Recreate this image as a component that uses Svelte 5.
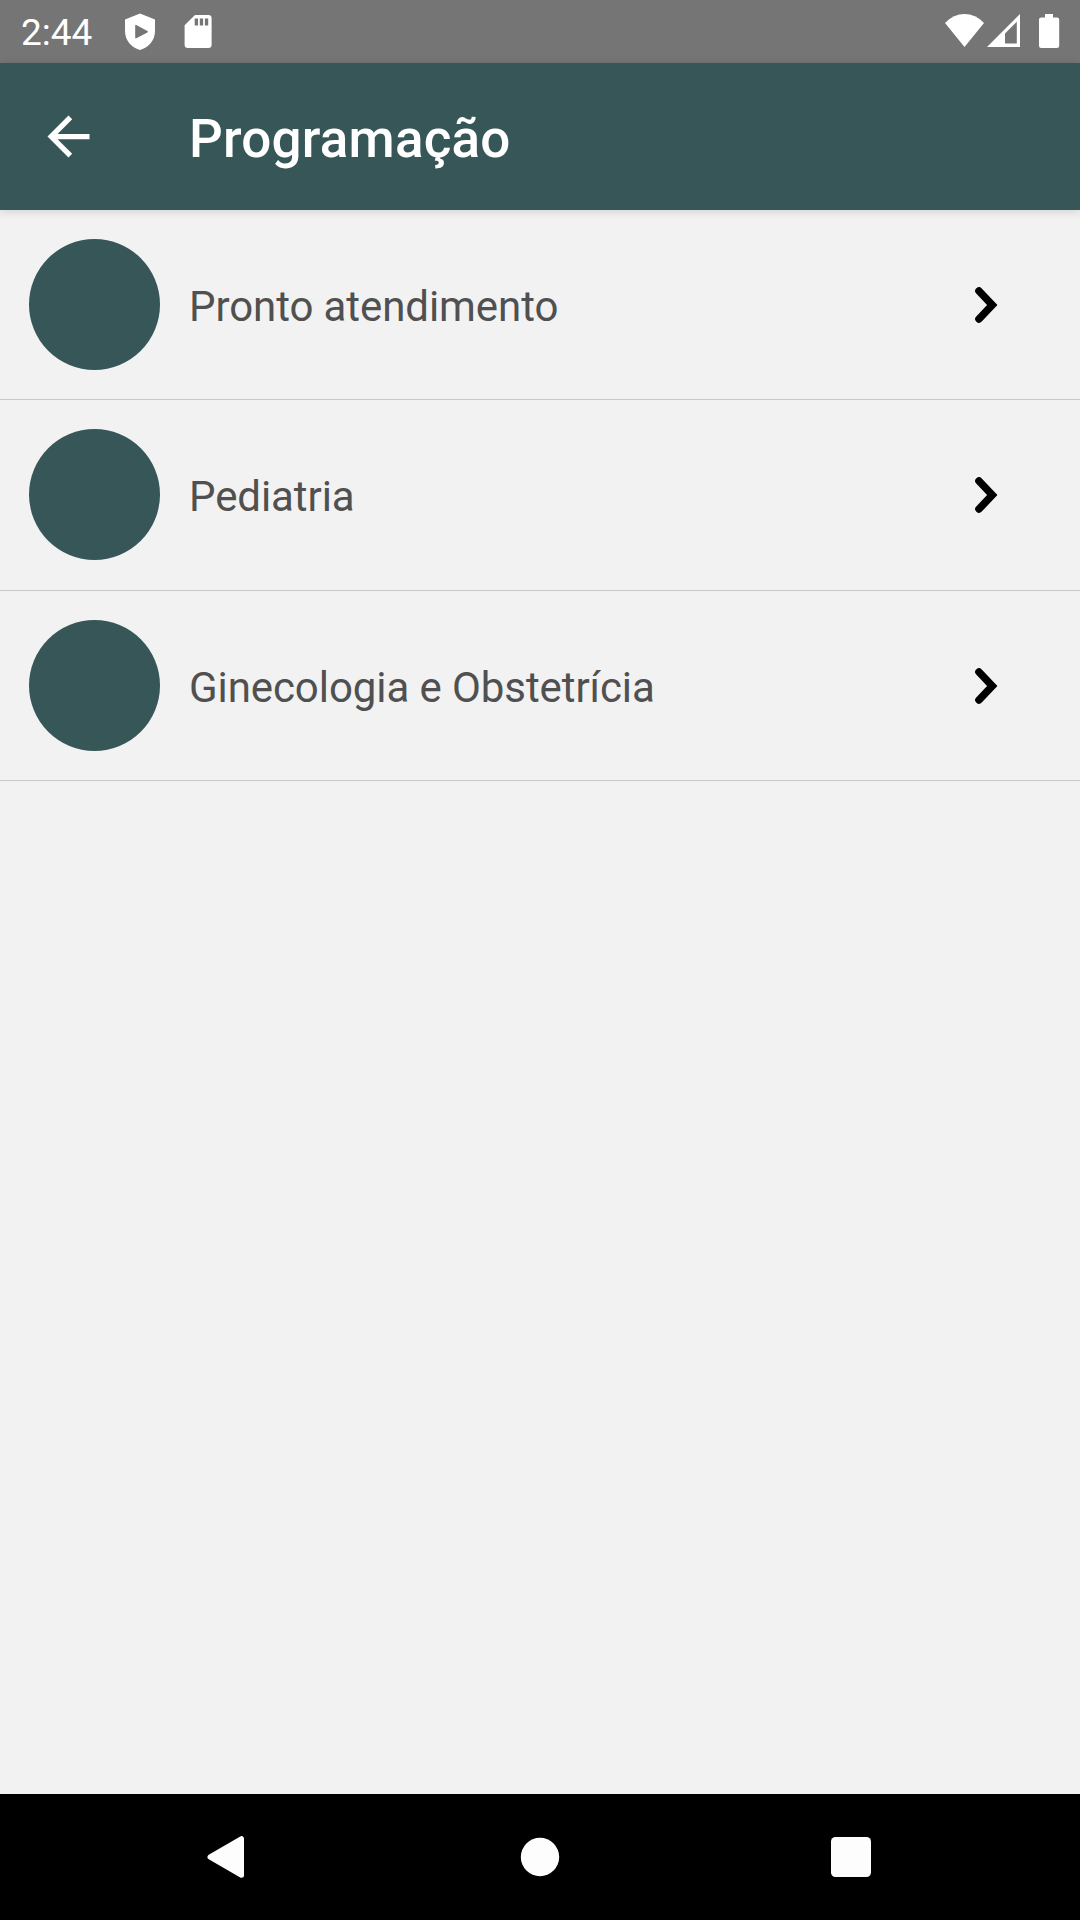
<script>
  const items = ['Pronto atendimento', 'Pediatria', 'Ginecologia e Obstetrícia'];
</script>

<div class="screen">
  <div class="status">
    <span class="clock">2:44</span>
    <svg class="shield" viewBox="124 12 32 40" width="32" height="40">
      <path fill="#fff" fill-rule="evenodd" d="M140 13.4 155 19.4V31C155 40 149 47.5 140 50C131 47.5 125 40 125 31V19.4ZM135.2 25.6V37.6Q135.2 38.8 136.3 38.2L147.4 32.4Q148.6 31.6 147.4 30.9L136.3 25Q135.2 24.4 135.2 25.6Z" />
    </svg>
    <svg class="card" viewBox="184 14 28 36" width="28" height="36">
      <path fill="#fff" fill-rule="evenodd" d="M195 15H208.4Q211.6 15 211.6 18.2V44.8Q211.6 48 208.4 48H187.8Q184.6 48 184.6 44.8V25.2ZM194.7 18.4V25.4H198V18.4ZM199.8 18.4V25.4H203.1V18.4ZM204.9 18.4V25.4H208.2V18.4Z" />
    </svg>
    <div class="signals">
      <svg viewBox="944 12 116 40" width="116" height="40">
        <path fill="#fff" d="M945 22.9Q953.5 14 964.5 14T984 22.9L964.5 47Z" />
        <path fill="#fff" fill-rule="evenodd" d="M1020 14V47H987ZM1016.8 21.8 1005 33.6V43.6H1016.8Z" />
        <path fill="#fff" d="M1045 14H1053V17.4H1057Q1059.2 17.4 1059.2 19.6V45.8Q1059.2 48 1057 48H1041.2Q1039 48 1039 45.8V19.6Q1039 17.4 1041.2 17.4H1045Z" />
      </svg>
    </div>
  </div>

  <header>
    <svg class="back" viewBox="0 0 24 24" width="63" height="63">
      <path fill="#fff" d="M20 11H7.83l5.59-5.59L12 4l-8 8 8 8 1.41-1.41L7.83 13H20v-2z" />
    </svg>
    <h1>Programação</h1>
  </header>

  <main>
    {#each items as item}
      <div class="row">
        <span class="avatar"></span>
        <span class="label">{item}</span>
        <svg class="chevron" viewBox="0 0 24 38" width="24" height="38">
          <path fill="none" stroke="#000" stroke-width="7.6" stroke-linecap="round" d="M5 5 18.2 19 5 33" />
        </svg>
      </div>
    {/each}
  </main>

  <nav>
    <svg viewBox="0 0 44 44" width="44" height="44">
      <path fill="#fdfdfd" stroke="#fdfdfd" stroke-width="5" stroke-linejoin="round" d="M5 22 36.5 3.7V40.3Z" />
    </svg>
    <svg viewBox="0 0 44 44" width="44" height="44">
      <circle cx="23" cy="22" r="19.2" fill="#fdfdfd" />
    </svg>
    <svg viewBox="0 0 44 44" width="44" height="44">
      <rect x="2" y="2" width="40" height="40" rx="4.5" fill="#fdfdfd" />
    </svg>
  </nav>
</div>

<style>
  :global(body) {
    margin: 0;
  }
  .screen {
    width: 1080px;
    height: 1920px;
    display: flex;
    flex-direction: column;
    overflow: hidden;
    background: #f2f2f2;
    font-family: Roboto, sans-serif;
  }
  svg {
    display: block;
    flex: none;
  }
  .status {
    flex: none;
    height: 63px;
    box-sizing: border-box;
    padding: 0 20px 0 21px;
    display: flex;
    align-items: center;
    background: #757575;
    color: #fff;
  }
  .clock {
    width: 103px;
    font-size: 37px;
    line-height: 43px;
    padding-top: 2px;
  }
  .card {
    margin-left: 28px;
  }
  .signals {
    margin-left: auto;
  }
  header {
    flex: none;
    height: 147px;
    box-sizing: border-box;
    padding-left: 37px;
    display: flex;
    align-items: center;
    background: #375658;
    box-shadow: 0 2px 9px rgba(0, 0, 0, 0.13);
  }
  h1 {
    margin: 4px 0 0 89px;
    color: #fff;
    font-size: 53px;
    font-weight: 500;
    line-height: 62px;
    letter-spacing: 0.2px;
  }
  main {
    flex: 1;
  }
  .row {
    height: 190px;
    box-sizing: border-box;
    padding: 0 82px 0 29px;
    display: flex;
    align-items: center;
    border-bottom: 1px solid #c8c8c8;
  }
  .row:nth-child(2) {
    height: 191px;
    padding-bottom: 1px;
  }
  .avatar {
    width: 131px;
    height: 131px;
    flex: none;
    border-radius: 50%;
    background: #375658;
  }
  .label {
    flex: 1;
    margin: 5px 0 0 29px;
    color: #505050;
    font-size: 42px;
    line-height: 50px;
    letter-spacing: -0.08px;
  }
  nav {
    flex: none;
    height: 126px;
    box-sizing: border-box;
    padding: 0 207px 0 205px;
    display: flex;
    align-items: center;
    justify-content: space-between;
    background: #000;
  }
</style>
